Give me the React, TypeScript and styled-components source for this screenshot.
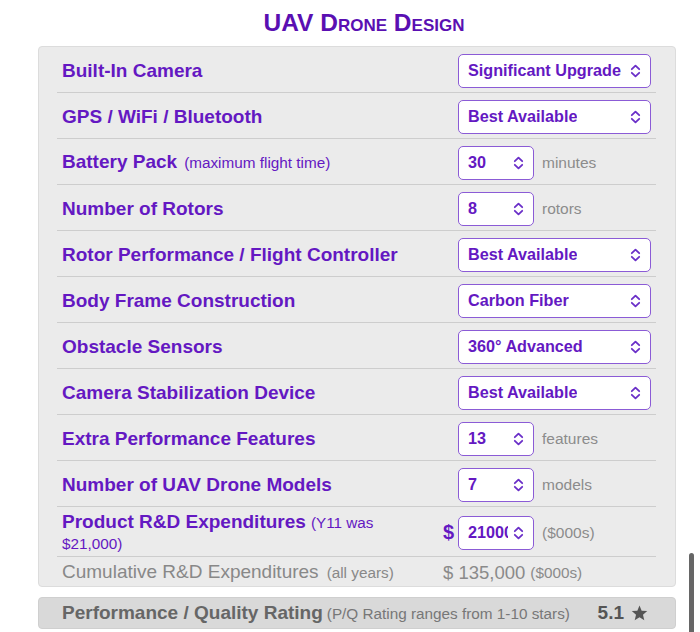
import React from 'react';
import styled, { createGlobalStyle } from 'styled-components';

const GlobalStyle = createGlobalStyle`
  html, body {
    margin: 0;
    padding: 0;
    background: #fff;
  }
  body {
    font-family: 'Liberation Sans', Arial, Helvetica, sans-serif;
  }
`;

const PURPLE = '#6418c2';

const Page = styled.div`
  width: 700px;
  height: 632px;
  overflow: hidden;
`;

const Title = styled.h1`
  margin: 0;
  height: 46px;
  line-height: 46px;
  padding-left: 28px;
  text-align: center;
  font-size: 24.5px;
  font-weight: bold;
  font-variant: small-caps;
  color: #5a0fb2;
`;

const Panel = styled.div`
  margin-left: 38px;
  width: 638px;
  box-sizing: border-box;
  background: #ebebeb;
  border: 1px solid #dcdcdc;
  border-radius: 4px;
  padding: 0 19px 0 18px;
`;

const Row = styled.div<{ h?: number; last?: boolean }>`
  display: grid;
  grid-template-columns: 1fr 208px;
  align-items: center;
  box-sizing: border-box;
  height: ${({ h }) => h ?? 46}px;
  padding: 2px 5px 0;
  border-bottom: ${({ last }) => (last ? 'none' : '1px solid #cdcdcd')};
`;

const Label = styled.div<{ muted?: boolean; maxWidth?: number }>`
  font-size: 19px;
  line-height: 20px;
  font-weight: ${({ muted }) => (muted ? 'normal' : 'bold')};
  color: ${({ muted }) => (muted ? '#888' : PURPLE)};
  padding-right: 4px;
  max-width: ${({ maxWidth }) => (maxWidth ? `${maxWidth}px` : 'none')};
`;

const Note = styled.span<{ gap?: number }>`
  font-size: 15.3px;
  font-weight: normal;
  margin-left: ${({ gap }) => gap ?? 7}px;
`;

const Control = styled.div`
  display: flex;
  align-items: center;
`;

const Prefix = styled.span`
  width: 15px;
  font-size: 20px;
  font-weight: bold;
  color: ${PURPLE};
`;

const SelectBox = styled.div<{ wide?: boolean }>`
  display: flex;
  align-items: center;
  justify-content: space-between;
  box-sizing: border-box;
  width: ${({ wide }) => (wide ? 193 : 76)}px;
  height: 34px;
  padding: 0 9px 0 9px;
  background: #fff;
  border: 1.5px solid #8b5bd6;
  border-radius: 5px;
  font-size: 16.2px;
  font-weight: bold;
  color: ${PURPLE};
`;

const SelectText = styled.span<{ wide?: boolean }>`
  overflow: hidden;
  white-space: nowrap;
  width: ${({ wide }) => (wide ? 'auto' : '40px')};
`;

const Unit = styled.span`
  margin-left: 8px;
  font-size: 15.5px;
  color: #8c8c8c;
`;

const Amount = styled.span`
  font-size: 18.5px;
  color: #8a8a8a;
`;

const AmountUnit = styled.span`
  margin-left: 5px;
  font-size: 15.3px;
  color: #8a8a8a;
`;

const RatingBar = styled.div`
  margin: 10px 0 0 38px;
  width: 638px;
  height: 32px;
  box-sizing: border-box;
  background: #d9d9d9;
  border: 1px solid #cfcfcf;
  border-radius: 4px;
  display: flex;
  align-items: center;
  padding: 0 27px 0 23px;
`;

const RatingLabel = styled.div`
  flex: 1;
  font-size: 19px;
  font-weight: bold;
  color: #666;
`;

const RatingNote = styled.span`
  font-size: 15.3px;
  font-weight: normal;
  color: #777;
  margin-left: 4px;
`;

const RatingValue = styled.div`
  display: flex;
  align-items: center;
  gap: 7px;
  font-size: 19px;
  font-weight: bold;
  color: #555;
`;

const ScrollThumb = styled.div`
  position: fixed;
  left: 689px;
  top: 553px;
  width: 5px;
  height: 90px;
  border-radius: 3px;
  background: #666;
`;

const Chevrons = () => (
  <svg width="11" height="14" viewBox="0 0 11 14" fill="none">
    <path d="M1.8 5.2 L5.5 1.6 L9.2 5.2" stroke="#6a2fc8" strokeWidth="1.8" strokeLinecap="round" strokeLinejoin="round" />
    <path d="M1.8 8.8 L5.5 12.4 L9.2 8.8" stroke="#6a2fc8" strokeWidth="1.8" strokeLinecap="round" strokeLinejoin="round" />
  </svg>
);

const Star = () => (
  <svg width="17" height="16" viewBox="0 0 24 23">
    <path d="M12 0.8 L15.1 8.2 L23.1 8.8 L17 14 L18.9 21.9 L12 17.6 L5.1 21.9 L7 14 L0.9 8.8 L8.9 8.2 Z" fill="#555" />
  </svg>
);

interface Field {
  label: string;
  note?: string;
  value: string;
  wide?: boolean;
  unit?: string;
}

const fields: Field[] = [
  { label: 'Built-In Camera', value: 'Significant Upgrade', wide: true },
  { label: 'GPS / WiFi / Bluetooth', value: 'Best Available', wide: true },
  { label: 'Battery Pack', note: '(maximum flight time)', value: '30', unit: 'minutes' },
  { label: 'Number of Rotors', value: '8', unit: 'rotors' },
  { label: 'Rotor Performance / Flight Controller', value: 'Best Available', wide: true },
  { label: 'Body Frame Construction', value: 'Carbon Fiber', wide: true },
  { label: 'Obstacle Sensors', value: '360° Advanced', wide: true },
  { label: 'Camera Stabilization Device', value: 'Best Available', wide: true },
  { label: 'Extra Performance Features', value: '13', unit: 'features' },
  { label: 'Number of UAV Drone Models', value: '7', unit: 'models' },
];

const Select: React.FC<{ value: string; wide?: boolean }> = ({ value, wide }) => (
  <SelectBox wide={wide}>
    <SelectText wide={wide}>{value}</SelectText>
    <Chevrons />
  </SelectBox>
);

const App: React.FC = () => (
  <Page>
    <GlobalStyle />
    <Title>UAV Drone Design</Title>
    <Panel>
      {fields.map(f => (
        <Row key={f.label}>
          <Label>
            {f.label}
            {f.note && <Note>{f.note}</Note>}
          </Label>
          <Control>
            <Prefix />
            <Select value={f.value} wide={f.wide} />
            {f.unit && <Unit>{f.unit}</Unit>}
          </Control>
        </Row>
      ))}
      <Row h={50}>
        <Label maxWidth={360}>
          Product R&amp;D Expenditures<Note gap={5}>(Y11 was $21,000)</Note>
        </Label>
        <Control>
          <Prefix>$</Prefix>
          <Select value="21000" />
          <Unit>($000s)</Unit>
        </Control>
      </Row>
      <Row h={29} last>
        <Label muted>
          Cumulative R&amp;D Expenditures<Note gap={8}>(all years)</Note>
        </Label>
        <Control>
          <Amount>$ 135,000</Amount>
          <AmountUnit>($000s)</AmountUnit>
        </Control>
      </Row>
    </Panel>
    <RatingBar>
      <RatingLabel>
        Performance / Quality Rating
        <RatingNote>(P/Q Rating ranges from 1-10 stars)</RatingNote>
      </RatingLabel>
      <RatingValue>
        5.1
        <Star />
      </RatingValue>
    </RatingBar>
    <ScrollThumb />
  </Page>
);

export default App;
